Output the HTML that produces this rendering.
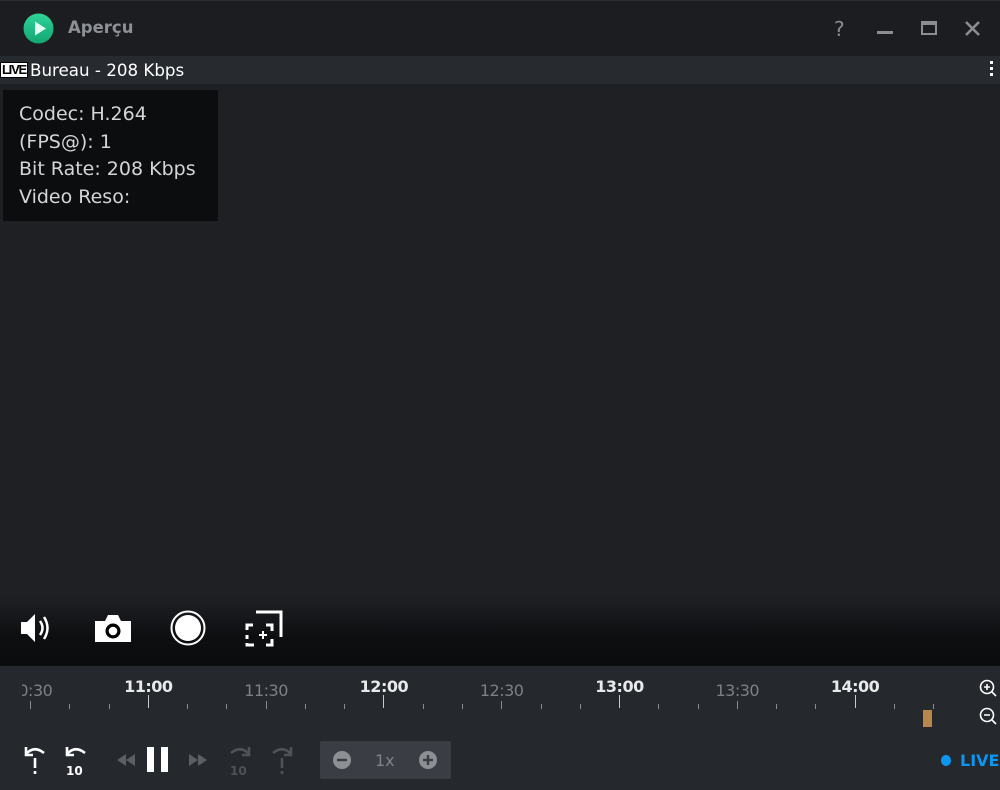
<!DOCTYPE html>
<html><head><meta charset="utf-8"><style>
*{margin:0;padding:0;box-sizing:border-box}
body{width:1000px;height:790px;overflow:hidden;background:#1e2024;font-family:"DejaVu Sans","Liberation Sans",sans-serif;position:relative}
.a{position:absolute}
</style></head><body>
<div class="a" style="left:0;top:0;width:1000px;height:56px;background:#1b1d21;border-top:1px solid #2a2d31"></div>
<svg class="a" style="left:23px;top:13px" width="31" height="31"><defs><linearGradient id="g" x1="0" y1="0" x2="0" y2="1"><stop offset="0" stop-color="#2fd39a"/><stop offset="1" stop-color="#12a672"/></linearGradient></defs><circle cx="15.5" cy="15.5" r="15" fill="url(#g)"/><path d="M12 8.5L23 15.5L12 22.5Z" fill="#e6fff5"/></svg>
<div class="a" style="left:68px;top:18px;font-size:16.5px;font-weight:bold;color:#8d9095">Aperçu</div>
<div class="a" style="left:834px;top:17px;font-size:20px;color:#8a8d91">?</div>
<div class="a" style="left:877px;top:31px;width:16px;height:3px;background:#8a8d91"></div>
<div class="a" style="left:921px;top:21px;width:16px;height:14px;border:2px solid #8a8d91;border-top-width:4px"></div>
<svg class="a" style="left:965px;top:21px" width="15" height="15"><path d="M1 1L14 14M14 1L1 14" stroke="#8a8d91" stroke-width="2.6"/></svg>
<div class="a" style="left:0;top:56px;width:1000px;height:28px;background:#272a2f"></div>
<div class="a" style="left:0;top:62px;height:16px;width:28px;background:#fff;border:1px solid #000;color:#000;font-family:'Liberation Sans';font-size:13px;font-weight:bold;line-height:14px;text-align:center;letter-spacing:-1.2px">LIVE</div>
<div class="a" style="left:30px;top:60px;font-size:16.7px;color:#fff">Bureau - 208 Kbps</div>
<div class="a" style="left:990px;top:61px;width:3px;height:3px;background:#fff;box-shadow:0 6px #fff,0 12px #fff"></div>
<div class="a" style="left:3px;top:90px;width:215px;height:131px;background:#0c0d0f;color:#d4d5d7;font-size:19px;line-height:27.5px;padding:11px 0 0 16px;white-space:nowrap">Codec: H.264<br>(FPS@): 1<br>Bit Rate: 208 Kbps<br>Video Reso:</div>
<div class="a" style="left:0;top:596px;width:1000px;height:70px;background:linear-gradient(#1e2024,#0d0e10 60%,#0b0c0d)"></div>
<svg class="a" style="left:18px;top:610px" width="36" height="36"><path d="M3 12H9L17 4V32L9 24H3Z" fill="#fff"/><path d="M22 11Q27 18 22 25M26 7Q33 18 26 29" stroke="#fff" stroke-width="2.5" fill="none"/></svg>
<svg class="a" style="left:94px;top:612px" width="38" height="32"><path d="M1 9H11L14 3H24L27 9H37V30H1Z" fill="#fff"/><circle cx="19" cy="19" r="7.5" fill="#000"/><circle cx="19" cy="19" r="4.3" fill="#fff"/></svg>
<svg class="a" style="left:169px;top:609px" width="38" height="38"><circle cx="19" cy="19" r="16.5" stroke="#fff" stroke-width="2" fill="none"/><circle cx="19" cy="19" r="13" fill="#fff"/></svg>
<svg class="a" style="left:244px;top:609px" width="40" height="38"><path d="M12 3H37V28" stroke="#fff" stroke-width="3" fill="none"/><path d="M3 34V36H10M22 36H28V30M28 22V16H22M9 16H3V21M3 26V30" stroke="#fff" stroke-width="3" fill="none"/><path d="M15 26H23M19 22V30" stroke="#fff" stroke-width="2"/></svg>
<div class="a" style="left:0;top:666px;width:1000px;height:124px;background:#25282d"></div>
<div id="tl"></div>
<svg class="a" style="left:978px;top:678px" width="20" height="20"><circle cx="9" cy="9" r="6.5" stroke="#fff" stroke-width="1.6" fill="none"/><path d="M6 9H12M9 6V12M14 14L18 18" stroke="#fff" stroke-width="1.6"/></svg>
<svg class="a" style="left:978px;top:706px" width="20" height="20"><circle cx="9" cy="9" r="6.5" stroke="#fff" stroke-width="1.6" fill="none"/><path d="M6 9H12M14 14L18 18" stroke="#fff" stroke-width="1.6"/></svg>
<div class="a" style="left:923px;top:710px;width:9px;height:17px;background:#b8884a"></div>
<svg class="a" style="left:22px;top:744px" width="275" height="32"><g stroke="#fff" stroke-width="2.6" fill="none"><path d="M4 10Q12 1 22 9M4 3V11H11"/></g><path d="M13 14V24M13 27V30" stroke="#fff" stroke-width="2.6"/>
<g stroke="#fff" stroke-width="2.6" fill="none"><path d="M45 10Q53 1 63 9M45 3V11H52"/></g><text x="44" y="31" font-family="DejaVu Sans" font-weight="bold" font-size="12" fill="#fff">10</text>
<path d="M95 16L104 10V22ZM104 16L113 10V22Z" fill="#5b5e63"/><rect x="125" y="3" width="7" height="25" fill="#fff"/><rect x="139" y="3" width="7" height="25" fill="#fff"/>
<path d="M167 10L176 16L167 22ZM176 10L185 16L176 22Z" fill="#5b5e63"/>
<g stroke="#4f5257" stroke-width="2.6" fill="none"><path d="M227 10Q219 1 209 9M227 3V11H220M269 10Q261 1 251 9M269 3V11H262"/></g><text x="208" y="31" font-family="DejaVu Sans" font-weight="bold" font-size="12" fill="#4f5257">10</text><path d="M260 14V24M260 27V30" stroke="#4f5257" stroke-width="2.6"/></svg>
<div class="a" style="left:320px;top:741px;width:131px;height:38px;background:#3a3d43;border-radius:2px"></div>
<svg class="a" style="left:332px;top:750px" width="110" height="20"><circle cx="10" cy="10" r="9" fill="#8c8f94"/><path d="M5 10H15" stroke="#3a3d43" stroke-width="2.4"/><circle cx="96" cy="10" r="9" fill="#8c8f94"/><path d="M91 10H101M96 5V15" stroke="#3a3d43" stroke-width="2.4"/></svg>
<div class="a" style="left:375px;top:751px;font-size:16px;color:#7f8287">1x</div>
<div class="a" style="left:941px;top:755px;width:10px;height:11px;border-radius:50%;background:#0d96f0"></div>
<div class="a" style="left:960px;top:751px;font-size:16px;font-weight:bold;color:#0d96f0">LIVE</div>
<script>
var h='';var labs=['10:30','11:00','11:30','12:00','12:30','13:00','13:30','14:00'];
for(var k=0;k<8;k++){var x=30.5+117.8*k;var maj=k%2==1;
h+='<div class="a" style="left:'+(x-0.5)+'px;top:'+(maj?695:701)+'px;width:1px;height:'+(maj?13:8)+'px;background:'+(maj?'#c8c9cb':'#888b8f')+'"></div>';
var st=maj?'font-weight:bold;color:#e8e9ea;top:677px':'color:#7d8085;top:681px';
h+='<div class="a" style="left:'+(x-40)+'px;width:80px;text-align:center;font-size:16px;letter-spacing:-0.5px;'+st+'">'+labs[k]+'</div>';
for(var m=1;m<3;m++){var mx=x+39.3*m;if(mx<935)h+='<div class="a" style="left:'+(mx-0.5)+'px;top:704px;width:1px;height:5px;background:#888b8f"></div>';}}
h+='<div class="a" style="left:0;top:670px;width:22px;height:30px;background:#25282d"></div>';
document.getElementById('tl').innerHTML=h;
</script>
</body></html>
